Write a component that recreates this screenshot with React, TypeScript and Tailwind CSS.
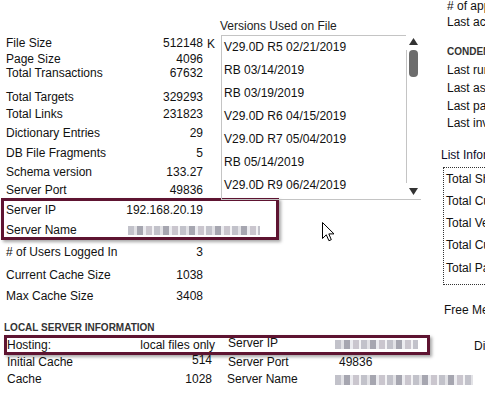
import React from "react";

type StatProps = {
  label: string;
  value?: string;
  className?: string;
};

function Stat(props: StatProps) {
  const { label, value, className } = props;
  return (
    <div className={`flex w-[197px] justify-between leading-[14px] ${className ?? ""}`}>
      <span>{label}</span>
      {value && <span>{value}</span>}
    </div>
  );
}

// pixelated "blurred" text used for hidden names / addresses
function Blur({ className }: { className: string }) {
  return (
    <div
      className={`shrink-0 blur-[0.6px] bg-[repeating-linear-gradient(90deg,#c2c2ca_0_6px,#e2e2e6_6px_9px,#a6a6b0_9px_15px,#ececf0_15px_18px,#cac6ce_18px_24px,#f3f3f5_24px_26px)] ${className}`}
    />
  );
}

function UpArrow() {
  return (
    <svg width="9" height="7" viewBox="0 0 9 7">
      <polygon points="4.5,0 9,7 0,7" fill="#333" />
    </svg>
  );
}

function DownArrow() {
  return (
    <svg width="9" height="7" viewBox="0 0 9 7">
      <polygon points="0,0 9,0 4.5,7" fill="#333" />
    </svg>
  );
}

const versions = [
  "V29.0D R5 02/21/2019",
  "RB 03/14/2019",
  "RB 03/19/2019",
  "V29.0D R6 04/15/2019",
  "V29.0D R7 05/04/2019",
  "RB 05/14/2019",
  "V29.0D R9 06/24/2019",
];

export default function App() {
  return (
    <div className="relative flex h-[397px] w-[485px] overflow-hidden bg-white text-[12px] text-[#111] font-['Liberation_Sans',Arial,sans-serif]">
      {/* left + middle */}
      <div className="flex w-[441px] shrink-0 flex-col">
        <div className="flex">
          {/* stats column */}
          <div className="flex w-[220px] shrink-0 flex-col pl-[6px] pt-[36px]">
            <div className="flex h-[16px] leading-[14px]">
              <div className="flex w-[197px] justify-between">
                <span>File Size</span>
                <span>512148</span>
              </div>
              <span className="ml-[4px] pt-[1px]">K</span>
            </div>
            <Stat label="Page Size" value="4096" className="h-[14px]" />
            <Stat label="Total Transactions" value="67632" className="h-[24px]" />
            <Stat label="Total Targets" value="329293" className="h-[17px]" />
            <Stat label="Total Links" value="231823" className="h-[19px]" />
            <Stat label="Dictionary Entries" value="29" className="h-[20px]" />
            <Stat label="DB File Fragments" value="5" className="h-[19px]" />
            <Stat label="Schema version" value="133.27" className="h-[18px]" />
            <Stat label="Server Port" value="49836" className="h-[15px]" />
            <div className="-ml-[5px] w-[278px] border-[3px] border-[#5e1431] pl-[2px] pt-[2px] shadow-[2px_2px_3px_rgba(0,0,0,0.35)]">
              <Stat label="Server IP" value="192.168.20.19" className="h-[20px]" />
              <div className="flex h-[14px] leading-[14px]">
                <span className="w-[122px] shrink-0">Server Name</span>
                <Blur className="mt-[3px] h-[9px] w-[132px]" />
              </div>
            </div>
            <Stat label="# of Users Logged In" value="3" className="mt-[5px] h-[23px]" />
            <Stat label="Current Cache Size" value="1038" className="h-[21px]" />
            <Stat label="Max Cache Size" value="3408" className="h-[14px]" />
          </div>

          {/* versions list */}
          <div className="flex w-[221px] shrink-0 flex-col pt-[19px]">
            <div className="h-[14px] leading-[14px] text-[#222]">Versions Used on File</div>
            <div className="ml-[1px] mt-[2px] flex w-[200px] border-b border-l border-[#c4c4c4]">
              <div className="flex-1 border-t border-[#c4c4c4] pb-[2px]">
                {versions.map((v) => (
                  <div key={v} className="h-[23px] pl-[2px] leading-[23px]">
                    {v}
                  </div>
                ))}
              </div>
              <div className="flex w-[15px] flex-col">
                <div className="ml-[3px] mt-[3px] flex h-[7px]">
                  <UpArrow />
                </div>
                <div className="mt-[5px] h-[133px] border-l border-[#c4c4c4]">
                  <div className="ml-[2px] h-[27px] w-[9px] rounded-[4px] bg-[#6d6d6d]" />
                </div>
                <div className="ml-[3px] mt-[5px] flex h-[7px]">
                  <DownArrow />
                </div>
              </div>
            </div>
          </div>
        </div>

        {/* local server info */}
        <div className="mt-[19px] h-[12px] pl-[4px] text-[10px] font-bold leading-[12px] text-[#333]">
          LOCAL SERVER INFORMATION
        </div>
        <div className="ml-[4px] mt-[1px] w-[426px] border-[3px] border-[#5e1431] shadow-[2px_2px_3px_rgba(0,0,0,0.35)]">
          <div className="flex h-[14px] leading-[14px]">
            <div className="flex w-[208px] shrink-0 justify-between">
              <span>Hosting:</span>
              <span>local files only</span>
            </div>
            <span className="ml-[13px] w-[107px] shrink-0 -mt-[2px]">Server IP</span>
            <Blur className="mt-[2px] h-[9px] w-[83px]" />
          </div>
        </div>
        <div className="flex h-[17px] pl-[7px] leading-[14px]">
          <div className="flex w-[208px] shrink-0 justify-between pr-[3px]">
            <span>Initial Cache</span>
            <span className="-mt-[2px]">514</span>
          </div>
          <span className="ml-[13px] w-[111px] shrink-0">Server Port</span>
          <span className="shrink-0">49836</span>
        </div>
        <div className="flex h-[17px] pl-[7px] leading-[14px]">
          <div className="flex w-[208px] shrink-0 justify-between pr-[3px]">
            <span>Cache</span>
            <span>1028</span>
          </div>
          <span className="ml-[12px] w-[108px] shrink-0">Server Name</span>
          <Blur className="mt-[3px] h-[10px] w-[138px]" />
        </div>
      </div>

      {/* right column, cut off by the window */}
      <div className="flex min-w-0 flex-1 flex-col whitespace-nowrap leading-[14px]">
        <div className="-mt-px h-[16px] pl-[6px]">
          # of applications
        </div>
        <div className="h-[14px] pl-[6px]">Last access</div>
        <div className="mt-[17px] h-[12px] pl-[6px] text-[10px] font-bold leading-[12px] text-[#333]">
          CONDENSE INFORMATION
        </div>
        <div className="mt-[5px] h-[18px] pl-[6px]">Last run</div>
        <div className="h-[18px] pl-[6px]">Last assigned</div>
        <div className="h-[17px] pl-[6px]">Last pack</div>
        <div className="h-[14px] pl-[6px]">Last invalid</div>
        <div className="mt-[18px] h-[14px] text-[#0c0c2a]">List Information</div>
        <div className="ml-[2px] mt-[5px] w-[200px] border border-dotted border-[#333] pb-[9px] pl-[2px] pt-[4px]">
          <div className="h-[22px]">Total Shares</div>
          <div className="h-[22px]">Total Current Users</div>
          <div className="h-[22px]">Total Versions</div>
          <div className="h-[23px]">Total Custom Lists</div>
          <div className="h-[14px]">Total Pages</div>
        </div>
        <div className="mt-[18px] h-[14px] pl-[3px]">Free Memory</div>
        <div className="mt-[22px] h-[14px] pl-[33px]">Disk Space</div>
      </div>

      {/* mouse pointer */}
      <svg
        className="absolute left-[322px] top-[222px]"
        width="13"
        height="20"
        viewBox="0 0 13 20"
      >
        <path
          d="M0.5 0.5 L0.5 16.5 L4.3 12.8 L6.9 18.7 L9.3 17.7 L6.8 11.9 L12 11.9 Z"
          fill="#fff"
          stroke="#000"
          strokeWidth="1"
          strokeLinejoin="miter"
        />
      </svg>
    </div>
  );
}
